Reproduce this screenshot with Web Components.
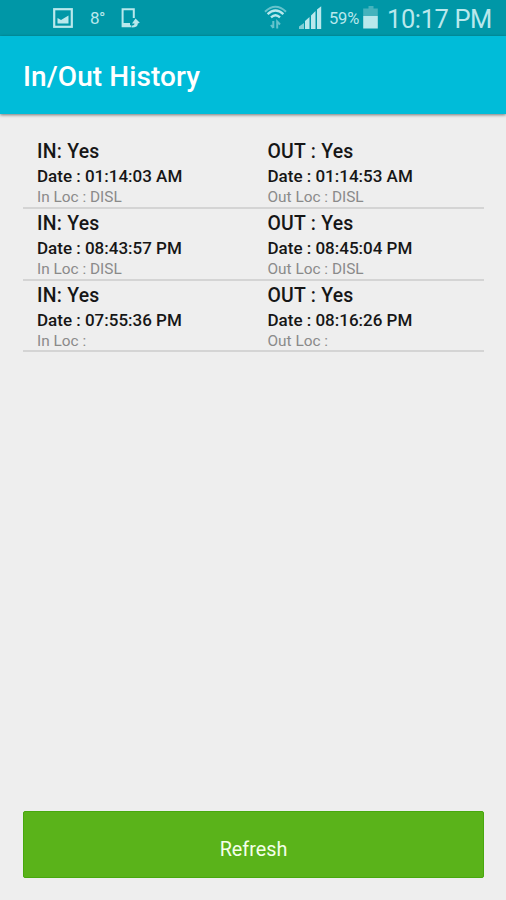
<!DOCTYPE html>
<html lang="en">
<head>
<meta charset="utf-8">
<title>In/Out History</title>
<style>
html,body{margin:0;height:100%;background:#eee;font-family:Roboto,"Liberation Sans",sans-serif}
body{overflow:hidden}
</style>
</head>
<body>
<history-screen></history-screen>
<script>
const define = (name, html) => customElements.define(name, class extends HTMLElement {
  constructor() {
    super();
    const t = document.createElement('template');
    t.innerHTML = html;
    this.attachShadow({mode: 'open'}).append(t.content.cloneNode(true));
  }
});

define('status-bar', `<style>
:host{display:flex;align-items:flex-start;height:36px;box-sizing:border-box;background:#0097a7;color:#b9e8ec;white-space:nowrap;overflow:hidden}
svg{display:block;flex:none}
.temp{font-size:17px;line-height:36px;width:31px;margin-left:15px;letter-spacing:-.5px}
.gap{flex:1}
.pct{font-size:16.5px;line-height:38px;margin-left:6px;width:34px;letter-spacing:-.2px}
.clock{font-size:25.5px;line-height:39px;width:119px;letter-spacing:-.4px}
</style>
<svg width="75" height="36" viewBox="0 0 75 36" fill="none">
 <rect x="54.2" y="9.2" width="17.6" height="17.6" stroke="#b9e8ec" stroke-width="2.2"/>
 <path d="M57.5 23.5V18L61 20L63.5 18.5L68.5 15.5V23.5Z" fill="#b9e8ec"/>
</svg>
<span class="temp">8°</span>
<svg width="23" height="36" viewBox="0 0 23 36" fill="none">
 <path d="M12.8 18V9.2H1.6V26.2H10" stroke="#b9e8ec" stroke-width="2"/>
 <path d="M2 23H9V27H2Z" fill="#b9e8ec"/>
 <path d="M14.5 18.5L18.8 22.8L16.8 23.5Q17 27.6 10.5 27.5V25.5Q13.5 25.5 13.5 23.5H11Z" fill="#b9e8ec"/>
</svg>
<span class="gap"></span>
<svg width="59" height="36" viewBox="0 0 59 36" fill="none">
 <path d="M1 11.7Q11.5 1.8 22 11.7" stroke="#65c3cc" stroke-width="2"/>
 <path d="M3.6 14.2Q11.5 6.8 19.4 14.2" stroke="#b9e8ec" stroke-width="2.3"/>
 <path d="M7 17.4Q11.5 13.1 16 17.4" stroke="#b9e8ec" stroke-width="2.3"/>
 <path d="M9.3 21V28M6.9 25L9.3 28M13.2 28.5V21.5L16 24.5" stroke="#65c3cc" stroke-width="2"/>
 <path d="M35 29V26.5L40 23V29Z" fill="#82ced5"/>
 <path d="M41 29V21L45.5 17V29Z M47 29V15.5L51.5 11V29Z M53 29V9.5L57.2 6.2V29Z" fill="#b9e8ec"/>
</svg>
<span class="pct">59%</span>
<svg width="24" height="36" viewBox="0 0 24 36">
 <path d="M5.5 6H10.5V8.5H14.8V16H.2V8.5H5.5Z" fill="#45b3bd"/>
 <path d="M.2 16H14.8V28.5H.2Z" fill="#b9e8ec"/>
</svg>
<span class="clock">10:17 PM</span>`);

define('app-bar', `<style>
:host{display:flex;align-items:center;height:78px;box-sizing:border-box;padding:3px 23px 0;background:#00bcd9;color:#fff;font-size:28px;font-weight:500;letter-spacing:.1px;box-shadow:0 1px 3px rgba(0,0,0,.5);position:relative;white-space:nowrap}
</style><slot></slot>`);

define('punch-entry', `<style>
:host{display:block;flex:1;padding-left:14px;white-space:nowrap;color:#161616}
div{font-weight:500}
.state{font-size:19.4px;line-height:27px;letter-spacing:.25px}
.date{font-size:17px;line-height:22px}
.loc{font-size:15.4px;line-height:20px;font-weight:400;color:#8a8a8a}
</style>
<div class="state"><slot name="state"></slot></div>
<div class="date"><slot name="date"></slot></div>
<div class="loc"><slot name="loc"></slot></div>`);

define('history-row', `<style>
:host{display:block;height:71.75px;box-sizing:border-box;border-bottom:2px solid #d4d4d4}
div{display:flex;padding-top:1px}
</style><div><slot></slot></div>`);

define('action-button', `<style>
:host{display:block}
button{display:block;width:100%;height:67px;padding:10px 0 0;border:1px solid #48a80e;border-radius:2px;background:#5ab31a;color:#f4ffe9;font:400 19.8px Roboto,sans-serif}
</style><button type="button"><slot></slot></button>`);

const records = [
  ['01:14:03 AM', '01:14:53 AM', ' DISL'],
  ['08:43:57 PM', '08:45:04 PM', ' DISL'],
  ['07:55:36 PM', '08:16:26 PM', '']
];
const entry = (state, date, loc) => `<punch-entry><span slot="state">${state}</span><span slot="date">Date : ${date}</span><span slot="loc">${loc}</span></punch-entry>`;
define('history-screen', `<style>
:host{display:flex;flex-direction:column;width:506px;height:900px;background:#eee}
main{flex:1;padding:23px 22px 0 23px}
footer{padding:0 22px 22px 23px}
</style>
<status-bar></status-bar>
<app-bar>In/Out History</app-bar>
<main>${records.map(([i, o, l]) => `<history-row>${entry('IN: Yes', i, 'In Loc :' + l)}${entry('OUT : Yes', o, 'Out Loc :' + l)}</history-row>`).join('')}</main>
<footer><action-button>Refresh</action-button></footer>`);
</script>
</body>
</html>
